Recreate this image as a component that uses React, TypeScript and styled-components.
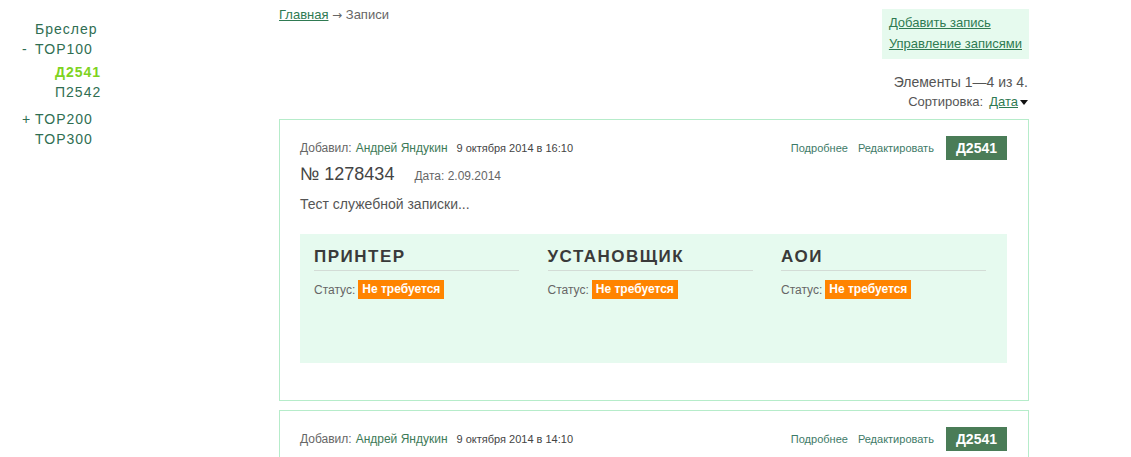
import styled, { createGlobalStyle } from "styled-components";

const GlobalStyle = createGlobalStyle`
  body {
    margin: 0;
    background: #fff;
    font-family: "Liberation Sans", Arial, sans-serif;
    color: #555;
  }
  ul {
    list-style: none;
    margin: 0;
    padding: 0;
  }
`;

const Page = styled.div`
  display: flex;
  align-items: flex-start;
`;

const Sidebar = styled.nav`
  width: 279px;
  flex-shrink: 0;
  padding: 19px 0 0 22px;
  box-sizing: border-box;
`;

const TreeItem = styled.li`
  display: flex;
  flex-direction: column;
`;

const TreeRow = styled.div`
  display: flex;
  font-size: 14px;
  line-height: 20px;
  letter-spacing: 1px;
  color: #2f6e52;
`;

const Marker = styled.span`
  width: 13px;
  letter-spacing: 0;
`;

const SubList = styled.ul`
  margin: 3px 0 7px 33px !important;
`;

const SubItem = styled.li<{ $active?: boolean }>`
  font-size: 14px;
  line-height: 20px;
  letter-spacing: 1px;
  font-weight: ${({ $active }) => ($active ? "bold" : "normal")};
  color: ${({ $active }) => ($active ? "#7ed321" : "#2f6e52")};
`;

const Main = styled.main`
  width: 750px;
  flex-shrink: 0;
`;

const TopBar = styled.div`
  display: flex;
  justify-content: space-between;
  align-items: flex-start;
`;

const Breadcrumbs = styled.div`
  font-size: 13px;
  line-height: 16px;
  padding-top: 7px;
  color: #666;
`;

const Arrow = styled.span`
  font-family: "DejaVu Sans", sans-serif;
  font-size: 12px;
  color: #666;
`;

const Link = styled.a`
  color: #2f7a52;
  text-decoration: underline;
  cursor: pointer;
`;

const ActionsBox = styled.div`
  margin-top: 9px;
  background: #e6faee;
  padding: 3px 7px 5px 7px;
  display: flex;
  flex-direction: column;
  font-size: 13px;
  line-height: 21px;
  white-space: nowrap;
`;

const Summary = styled.div`
  display: flex;
  flex-direction: column;
  align-items: flex-end;
  margin: 13px 1px 7px 0;
  color: #555;
`;

const Counter = styled.div`
  font-size: 14px;
  line-height: 20px;
`;

const Sorting = styled.div`
  font-size: 13px;
  line-height: 20px;
  display: flex;
  align-items: center;
  gap: 6px;
`;

const Caret = styled.span`
  display: inline-block;
  width: 0;
  height: 0;
  border-left: 4px solid transparent;
  border-right: 4px solid transparent;
  border-top: 5px solid #111;
  margin-left: -4px;
`;

const Card = styled.article`
  border: 1px solid #b6ecca;
  padding: 16px 21px 37px 20px;
  margin-bottom: 9px;
`;

const CardHead = styled.div`
  display: flex;
  justify-content: space-between;
  align-items: center;
  height: 24px;
`;

const Meta = styled.div`
  font-size: 12px;
  color: #666;
  display: flex;
  align-items: baseline;
`;

const Author = styled.span`
  color: #3d7a57;
  margin-left: 4px;
`;

const Stamp = styled.span`
  font-size: 11px;
  color: #444;
  margin-left: 9px;
`;

const Tools = styled.div`
  display: flex;
  align-items: center;
  gap: 10px;
  font-size: 11px;
`;

const ToolLink = styled.a`
  color: #3d7a67;
  cursor: pointer;
`;

const CodeBadge = styled.span`
  background: #4a7c57;
  color: #fff;
  font-weight: bold;
  font-size: 14px;
  line-height: 24px;
  height: 24px;
  padding: 0 10px;
  margin-left: 2px;
`;

const NumberRow = styled.div`
  display: flex;
  align-items: baseline;
  margin-top: 2px;
  line-height: 24px;
`;

const DocNumber = styled.span`
  font-size: 18px;
  color: #444;
`;

const DocDate = styled.span`
  font-size: 12px;
  color: #666;
  margin-left: 20px;
`;

const Description = styled.p`
  margin: 6px 0 0;
  font-size: 14px;
  line-height: 20px;
  color: #555;
`;

const Stages = styled.div`
  margin-top: 20px;
  background: #e6faef;
  padding: 13px 21px 0 14px;
  height: 129px;
  box-sizing: border-box;
  display: grid;
  grid-template-columns: repeat(3, 205px);
  column-gap: 28.5px;
  align-content: start;
`;

const Stage = styled.div`
  display: flex;
  flex-direction: column;
`;

const StageTitle = styled.h3`
  margin: 0;
  font-size: 17px;
  line-height: 20px;
  letter-spacing: 1.5px;
  font-weight: bold;
  text-transform: uppercase;
  color: #3a3a3a;
  padding-bottom: 3px;
  border-bottom: 1px solid #d3dcd6;
`;

const StatusRow = styled.div`
  margin-top: 9px;
  display: flex;
  align-items: center;
  gap: 3px;
  font-size: 12px;
  color: #666;
`;

const StatusBadge = styled.span`
  background: #ff8400;
  color: #fff;
  font-weight: bold;
  font-size: 12px;
  line-height: 19px;
  padding: 0 4px;
`;

type Entry = {
  stamp: string;
  number: string;
  date: string;
  text: string;
};

const entries: Entry[] = [
  {
    stamp: "9 октября 2014 в 16:10",
    number: "1278434",
    date: "2.09.2014",
    text: "Тест служебной записки...",
  },
  {
    stamp: "9 октября 2014 в 14:10",
    number: "1278433",
    date: "2.09.2014",
    text: "Тест служебной записки...",
  },
];

const stages = ["Принтер", "Установщик", "АОИ"];

const App = () => {
  return (
    <>
      <GlobalStyle />
      <Page>
        <Sidebar>
          <ul>
            <TreeItem>
              <TreeRow>
                <Marker />
                Бреслер
              </TreeRow>
            </TreeItem>
            <TreeItem>
              <TreeRow>
                <Marker>-</Marker>
                TOP100
              </TreeRow>
              <SubList>
                <SubItem $active>Д2541</SubItem>
                <SubItem>П2542</SubItem>
              </SubList>
            </TreeItem>
            <TreeItem>
              <TreeRow>
                <Marker>+</Marker>
                TOP200
              </TreeRow>
            </TreeItem>
            <TreeItem>
              <TreeRow>
                <Marker />
                TOP300
              </TreeRow>
            </TreeItem>
          </ul>
        </Sidebar>

        <Main>
          <TopBar>
            <Breadcrumbs>
              <Link>Главная</Link> <Arrow>→</Arrow> Записи
            </Breadcrumbs>
            <ActionsBox>
              <Link>Добавить запись</Link>
              <Link>Управление записями</Link>
            </ActionsBox>
          </TopBar>

          <Summary>
            <Counter>Элементы 1—4 из 4.</Counter>
            <Sorting>
              Сортировка: <Link>Дата</Link>
              <Caret />
            </Sorting>
          </Summary>

          {entries.map((entry, i) => (
            <Card key={i}>
              <CardHead>
                <Meta>
                  Добавил: <Author>Андрей Яндукин</Author>
                  <Stamp>{entry.stamp}</Stamp>
                </Meta>
                <Tools>
                  <ToolLink>Подробнее</ToolLink>
                  <ToolLink>Редактировать</ToolLink>
                  <CodeBadge>Д2541</CodeBadge>
                </Tools>
              </CardHead>
              <NumberRow>
                <DocNumber>№ {entry.number}</DocNumber>
                <DocDate>Дата: {entry.date}</DocDate>
              </NumberRow>
              <Description>{entry.text}</Description>
              <Stages>
                {stages.map((s) => (
                  <Stage key={s}>
                    <StageTitle>{s}</StageTitle>
                    <StatusRow>
                      Статус: <StatusBadge>Не требуется</StatusBadge>
                    </StatusRow>
                  </Stage>
                ))}
              </Stages>
            </Card>
          ))}
        </Main>
      </Page>
    </>
  );
};

export default App;
